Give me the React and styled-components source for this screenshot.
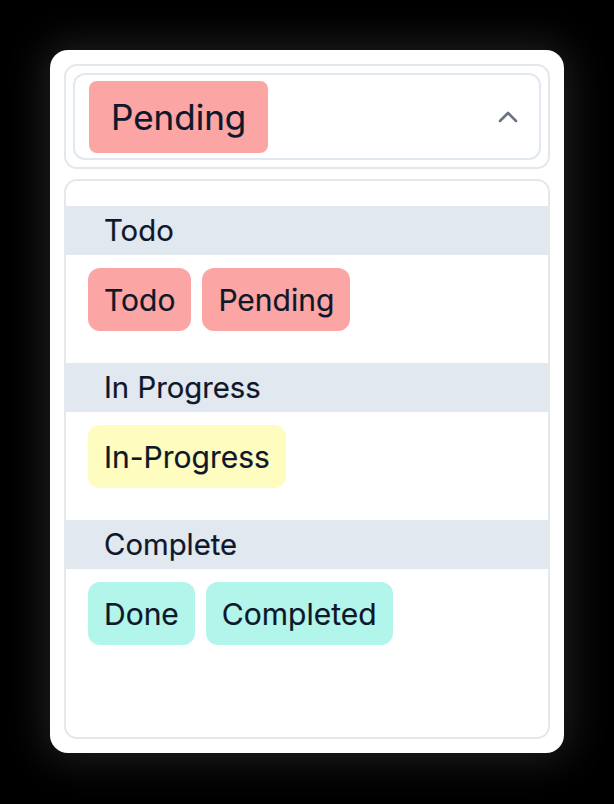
import React from 'react';
import styled, { createGlobalStyle } from 'styled-components';

const GlobalStyle = createGlobalStyle`
    html, body {
        margin: 0;
        padding: 0;
        background: #000;
        font-family: Inter, "Noto Sans", sans-serif;
    }
`;

const Page = styled.div`
    width: 614px;
    height: 804px;
    padding: 50px;
    box-sizing: border-box;
    background: #000;
`;

const Card = styled.div`
    width: 514px;
    height: 703px;
    box-sizing: border-box;
    background: #fff;
    border-radius: 18px;
    padding: 14px;
    display: flex;
    flex-direction: column;
    gap: 10px;
    box-shadow: 0 0 40px 6px rgba(70, 70, 70, 0.45);
`;

const TriggerOuter = styled.div`
    border: 2px solid #e5e7eb;
    border-radius: 13px;
    padding: 7px;
`;

const Trigger = styled.div`
    display: flex;
    align-items: center;
    justify-content: space-between;
    border: 2px solid #e2e8f0;
    border-radius: 12px;
    padding: 6px 20px 5px 14px;
`;

const Chip = styled.span`
    display: inline-flex;
    align-items: center;
    background: ${p => p.$color};
    color: #0f172a;
    border-radius: ${p => (p.$big ? '8px' : '12px')};
    font-size: ${p => (p.$big ? '35px' : '30px')};
    -webkit-text-stroke: 0.2px #0f172a;
    height: ${p => (p.$big ? '72px' : '63px')};
    padding: 0 ${p => (p.$big ? '22px' : '16px')};
    box-sizing: border-box;
`;

const ListBox = styled.div`
    flex: 1;
    border: 2px solid #e5e7eb;
    border-radius: 13px;
    padding-top: 25px;
`;

const GroupHeader = styled.div`
    height: 49px;
    display: flex;
    align-items: center;
    background: #e2e8f0;
    color: #0f172a;
    font-size: 29.3px;
    -webkit-text-stroke: 0.2px #0f172a;
    padding-left: 38px;
`;

const ChipRow = styled.div`
    display: flex;
    gap: 11px;
    padding: 13px 22px 32px;
`;

const colors = {
    red: '#fca5a5',
    yellow: '#fefcbf',
    teal: '#b2f5ea',
};

const groups = [
    { title: 'Todo', color: colors.red, items: ['Todo', 'Pending'] },
    { title: 'In Progress', color: colors.yellow, items: ['In-Progress'] },
    { title: 'Complete', color: colors.teal, items: ['Done', 'Completed'] },
];

const Chevron = () => (
    <svg width="22" height="14" viewBox="0 0 22 14" fill="none">
        <path d="M3 11 L11 3 L19 11" stroke="#6b7280" strokeWidth="2.6" strokeLinecap="round" strokeLinejoin="round" />
    </svg>
);

export default function App() {
    return (
        <Page>
            <GlobalStyle />
            <Card>
                <TriggerOuter>
                    <Trigger>
                        <Chip $big $color={colors.red}>Pending</Chip>
                        <Chevron />
                    </Trigger>
                </TriggerOuter>
                <ListBox>
                    {groups.map(g => (
                        <div key={g.title}>
                            <GroupHeader>{g.title}</GroupHeader>
                            <ChipRow>
                                {g.items.map(i => (
                                    <Chip key={i} $color={g.color}>{i}</Chip>
                                ))}
                            </ChipRow>
                        </div>
                    ))}
                </ListBox>
            </Card>
        </Page>
    );
}
